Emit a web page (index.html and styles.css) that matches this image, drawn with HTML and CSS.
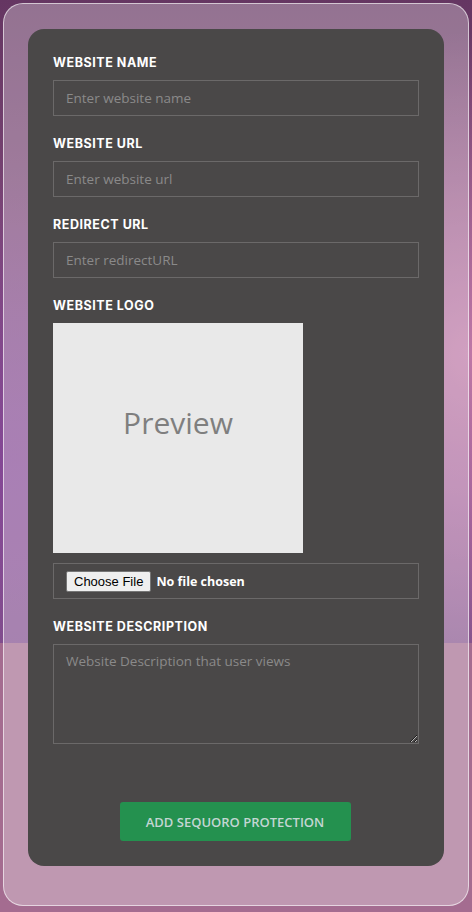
FILE: index.html
```html
<!DOCTYPE html>
<html lang="en">
<head>
<meta charset="utf-8">
<title>Add Website</title>
<link rel="stylesheet" href="styles.css">
</head>
<body>
<div class="panel">
  <form class="card">
    <div class="field">
      <label class="label" for="name">Website Name</label>
      <input class="input" id="name" type="text" placeholder="Enter website name">
    </div>
    <div class="field">
      <label class="label" for="url">Website URL</label>
      <input class="input" id="url" type="text" placeholder="Enter website url">
    </div>
    <div class="field">
      <label class="label" for="redirect">Redirect URL</label>
      <input class="input" id="redirect" type="text" placeholder="Enter redirectURL">
    </div>
    <div class="field">
      <label class="label" for="logo">Website Logo</label>
      <div class="preview">Preview</div>
      <div class="filebox"><input class="file" id="logo" type="file"></div>
    </div>
    <div class="field">
      <label class="label" for="desc">Website Description</label>
      <textarea class="textarea" id="desc" placeholder="Website Description that user views"></textarea>
    </div>
    <div class="actions">
      <button class="btn" type="button">Add Sequoro Protection</button>
    </div>
  </form>
</div>
</body>
</html>
```
FILE: styles.css
```css
html, body {
  margin: 0;
  padding: 0;
}
body {
  width: 472px;
  height: 912px;
  overflow: hidden;
  box-sizing: border-box;
  padding: 3px;
  background-color: #a46c90;
  background-image:
    radial-gradient(ellipse 60% 50% at 100% 55%, rgba(196,124,170,0.9), rgba(196,124,170,0) 100%),
    radial-gradient(ellipse 70% 45% at 0% 72%, rgba(130,70,150,0.8), rgba(130,70,150,0) 100%),
    linear-gradient(to bottom, #653662 0%, #7a4575 35%, #8c5090 75%, #80508a 100%);
  background-size: 100% 643px, 100% 643px, 100% 643px;
  background-repeat: no-repeat;
  font-family: "Open Sans", "Liberation Sans", sans-serif;
}
.panel {
  height: 903px;
  box-sizing: border-box;
  border: 1px solid rgba(255,255,255,0.6);
  border-radius: 20px;
  background: rgba(255,255,255,0.3);
  padding: 25px 24px;
}
.card {
  background: #4a4848;
  border-radius: 16px;
  padding: 26px 25px 25px;
  display: flex;
  flex-direction: column;
  gap: 20px;
  height: 837px;
  box-sizing: border-box;
}
.field {
  display: flex;
  flex-direction: column;
}
.label {
  font-family: "Inter", "DejaVu Sans", sans-serif;
  font-weight: 700;
  font-size: 12.5px;
  line-height: 16px;
  color: #ffffff;
  text-transform: uppercase;
  letter-spacing: 0.55px;
  margin-bottom: 9px;
}
.input, .textarea {
  box-sizing: border-box;
  width: 100%;
  margin: 0;
  border: 1px solid #6b6969;
  background: transparent;
  color: #ddd;
  font-family: "Open Sans", sans-serif;
  font-size: 13.5px;
  outline: none;
  border-radius: 0;
}
.input {
  height: 36px;
  padding: 0 12px;
}
.textarea {
  height: 100px;
  padding: 7px 12px;
  resize: vertical;
  display: block;
}
.input::placeholder, .textarea::placeholder {
  color: #8a8a8a;
}
.preview {
  width: 250px;
  height: 230px;
  box-sizing: border-box;
  padding-top: 85px;
  background: #e9e9e9;
  color: #7f7f7f;
  font-size: 30px;
  line-height: 30px;
  text-align: center;
}
.filebox {
  margin-top: 10px;
  height: 36px;
  box-sizing: border-box;
  border: 1px solid #6b6969;
  display: flex;
  align-items: center;
  padding: 0 12px;
}
.file {
  color: #ffffff;
  font-family: "Open Sans", sans-serif;
  font-weight: 700;
  font-size: 12.5px;
}
.file::file-selector-button {
  font-family: "Liberation Sans", Arial, sans-serif;
  font-weight: 400;
  font-size: 13px;
  color: #000;
  background: #efefef;
  border: 1px solid #767676;
  border-radius: 2px;
  padding: 1px 7px;
  margin-right: 5px;
  height: 21px;
}
.actions {
  display: flex;
  justify-content: center;
  margin-top: 38px;
}
.btn {
  width: 231px;
  height: 39px;
  margin-left: -2px;
  background: #24914f;
  color: #c3d6d3;
  border: none;
  border-radius: 3px;
  font-family: "Open Sans", sans-serif;
  font-weight: 600;
  font-size: 13px;
  text-transform: uppercase;
}
```
